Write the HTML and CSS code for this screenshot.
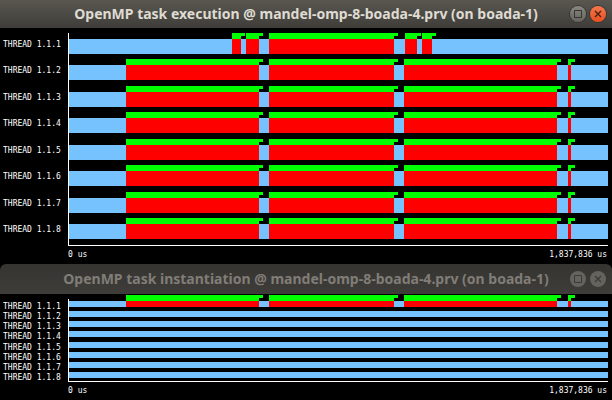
FILE: index.html
```html
<!DOCTYPE html>
<html lang="en">
<head>
<meta charset="utf-8">
<title>OpenMP task timelines</title>
<link rel="stylesheet" href="styles.css">
</head>
<body>
<svg class="defs" aria-hidden="true">
  <symbol id="tasks-main" viewBox="0 0 539 21" preserveAspectRatio="none">
    <path fill="#75c2ff" d="M0 6h539v15H0z"/>
    <path fill="#f00" d="M163 6h9v15h-9zM177 6h13v15h-13zM200 6h125v15H200zM336 6h12v15h-12zM353 6h10v15h-10z"/>
    <path fill="#0f0" d="M163 0h13v3h-4v3h-9zM177 0h17v3h-4v3h-13zM200 0h129v3h-4v3H200zM336 0h16v3h-4v3h-12zM353 0h14v3h-4v3h-10z"/>
  </symbol>
  <symbol id="tasks-worker" viewBox="0 0 539 21" preserveAspectRatio="none">
    <path fill="#75c2ff" d="M0 6h539v15H0z"/>
    <path fill="#f00" d="M57 6h133v15H57zM200 6h125v15H200zM335 6h153v15H335zM499 6h3v15h-3z"/>
    <path fill="#0f0" d="M57 0h137v3h-4v3H57zM200 0h129v3h-4v3H200zM335 0h157v3h-4v3H335zM499 0h7v3h-4v3h-3z"/>
  </symbol>
  <symbol id="creation-main" viewBox="0 0 539 12" preserveAspectRatio="none">
    <path fill="#75c2ff" d="M0 6h539v6H0z"/>
    <path fill="#f00" d="M57 6h133v6H57zM200 6h125v6H200zM335 6h153v6H335zM499 6h3v6h-3z"/>
    <path fill="#0f0" d="M57 0h137v3h-4v3H57zM200 0h129v3h-4v3H200zM335 0h157v3h-4v3H335zM499 0h7v3h-4v3h-3z"/>
  </symbol>
  <symbol id="creation-idle" viewBox="0 0 539 12" preserveAspectRatio="none">
    <path fill="#75c2ff" d="M0 6h539v6H0z"/>
  </symbol>
  <symbol id="maximize" viewBox="0 0 16 16">
    <path fill="none" stroke="currentColor" stroke-width="1" d="M4.500 4.500h7v7h-7z"/>
  </symbol>
  <symbol id="close" viewBox="0 0 16 16">
    <path fill="none" stroke="currentColor" stroke-width="1.400" d="M5 5l6 6M11 5l-6 6"/>
  </symbol>
</svg>

<section class="window active">
  <header class="titlebar">
    <h1 class="title">OpenMP task execution @ mandel-omp-8-boada-4.prv (on boada-1)</h1>
    <div class="controls">
      <button class="control" type="button" aria-label="Maximize"><svg><use href="#maximize"/></svg></button>
      <button class="control close" type="button" aria-label="Close"><svg><use href="#close"/></svg></button>
    </div>
  </header>
  <div class="plot execution">
    <div class="row"><span class="label">THREAD 1.1.1</span><svg class="track"><use href="#tasks-main"/></svg></div>
    <div class="row"><span class="label">THREAD 1.1.2</span><svg class="track"><use href="#tasks-worker"/></svg></div>
    <div class="row"><span class="label">THREAD 1.1.3</span><svg class="track"><use href="#tasks-worker"/></svg></div>
    <div class="row"><span class="label">THREAD 1.1.4</span><svg class="track"><use href="#tasks-worker"/></svg></div>
    <div class="row"><span class="label">THREAD 1.1.5</span><svg class="track"><use href="#tasks-worker"/></svg></div>
    <div class="row"><span class="label">THREAD 1.1.6</span><svg class="track"><use href="#tasks-worker"/></svg></div>
    <div class="row"><span class="label">THREAD 1.1.7</span><svg class="track"><use href="#tasks-worker"/></svg></div>
    <div class="row"><span class="label">THREAD 1.1.8</span><svg class="track"><use href="#tasks-worker"/></svg></div>
  </div>
  <div class="scale"><span>0 us</span><span>1,837,836 us</span></div>
</section>

<section class="window inactive">
  <header class="titlebar">
    <h2 class="title">OpenMP task instantiation @ mandel-omp-8-boada-4.prv (on boada-1)</h2>
    <div class="controls">
      <button class="control" type="button" aria-label="Maximize"><svg><use href="#maximize"/></svg></button>
      <button class="control close" type="button" aria-label="Close"><svg><use href="#close"/></svg></button>
    </div>
  </header>
  <div class="plot instantiation">
    <div class="row"><span class="label">THREAD 1.1.1</span><svg class="track"><use href="#creation-main"/></svg></div>
    <div class="row"><span class="label">THREAD 1.1.2</span><svg class="track"><use href="#creation-idle"/></svg></div>
    <div class="row"><span class="label">THREAD 1.1.3</span><svg class="track"><use href="#creation-idle"/></svg></div>
    <div class="row"><span class="label">THREAD 1.1.4</span><svg class="track"><use href="#creation-idle"/></svg></div>
    <div class="row"><span class="label">THREAD 1.1.5</span><svg class="track"><use href="#creation-idle"/></svg></div>
    <div class="row"><span class="label">THREAD 1.1.6</span><svg class="track"><use href="#creation-idle"/></svg></div>
    <div class="row"><span class="label">THREAD 1.1.7</span><svg class="track"><use href="#creation-idle"/></svg></div>
    <div class="row"><span class="label">THREAD 1.1.8</span><svg class="track"><use href="#creation-idle"/></svg></div>
  </div>
  <div class="scale"><span>0 us</span><span>1,837,836 us</span></div>
</section>
</body>
</html>
```
FILE: styles.css
```css
* { box-sizing: border-box; }

body {
  margin: 0;
  background: #000;
  color: #fff;
  font: 8px/10px "DejaVu Sans Mono", monospace;
}

.defs {
  position: absolute;
  width: 0;
  height: 0;
}

/* Equal side columns keep the title centred in the window */
.titlebar {
  display: grid;
  grid-template-columns: 1fr auto 1fr;
  align-items: center;
  padding: 0 6px;
  background: linear-gradient(#595750, #3e3d39);
  color: #dfdbd2;
}

.active .titlebar { height: 28px; }

.inactive .titlebar {
  height: 30px;
  border-radius: 6px 6px 0 0;
  background: linear-gradient(#353430, #3e3d39);
  color: #807d78;
}

.title {
  grid-column: 2;
  margin: 0;
  font: 700 14px/20px "Noto Sans", "Open Sans", sans-serif;
  text-align: center;
  white-space: nowrap;
}

.controls {
  display: flex;
  justify-content: flex-end;
  gap: 4px;
}

.control {
  flex: none;
  width: 16px;
  height: 16px;
  padding: 0;
  border: 0;
  border-radius: 50%;
  background: linear-gradient(#888680, #65635d);
  box-shadow: 0 0 0 1px #383733;
  color: #35342f;
}

.control svg {
  display: block;
  width: 16px;
  height: 16px;
}

.active .close {
  background: linear-gradient(#f4764e, #e9501f);
  color: #48200f;
}

.inactive .control {
  background: #65635d;
  box-shadow: none;
  color: #3c3b37;
}

.plot {
  position: relative;
  margin-top: 5px;
  padding: 0 4px 1px 3px;
}

/* Axis lines over the left and bottom edges of the tracks */
.plot::after {
  content: "";
  position: absolute;
  inset: 0 4px 0 68px;
  border: solid #fff;
  border-width: 0 0 1px 1px;
}

.row {
  display: grid;
  grid-template-columns: 66px 1fr;
  align-items: start;
  height: 27px;
}

.execution .row:nth-child(odd) { height: 26px; }

.track {
  display: block;
  width: 100%;
  height: 21px;
  shape-rendering: crispEdges;
}

.label {
  line-height: 23px;
  white-space: nowrap;
}

.instantiation .row { height: 10px; }

.instantiation .row:nth-child(4n) { height: 11px; }

.instantiation .label { line-height: 15px; }

.instantiation .track {
  height: 12px;
  margin-top: -4px;
}

.scale {
  display: flex;
  justify-content: space-between;
  padding: 4px 5px 4px 68px;
}
```
